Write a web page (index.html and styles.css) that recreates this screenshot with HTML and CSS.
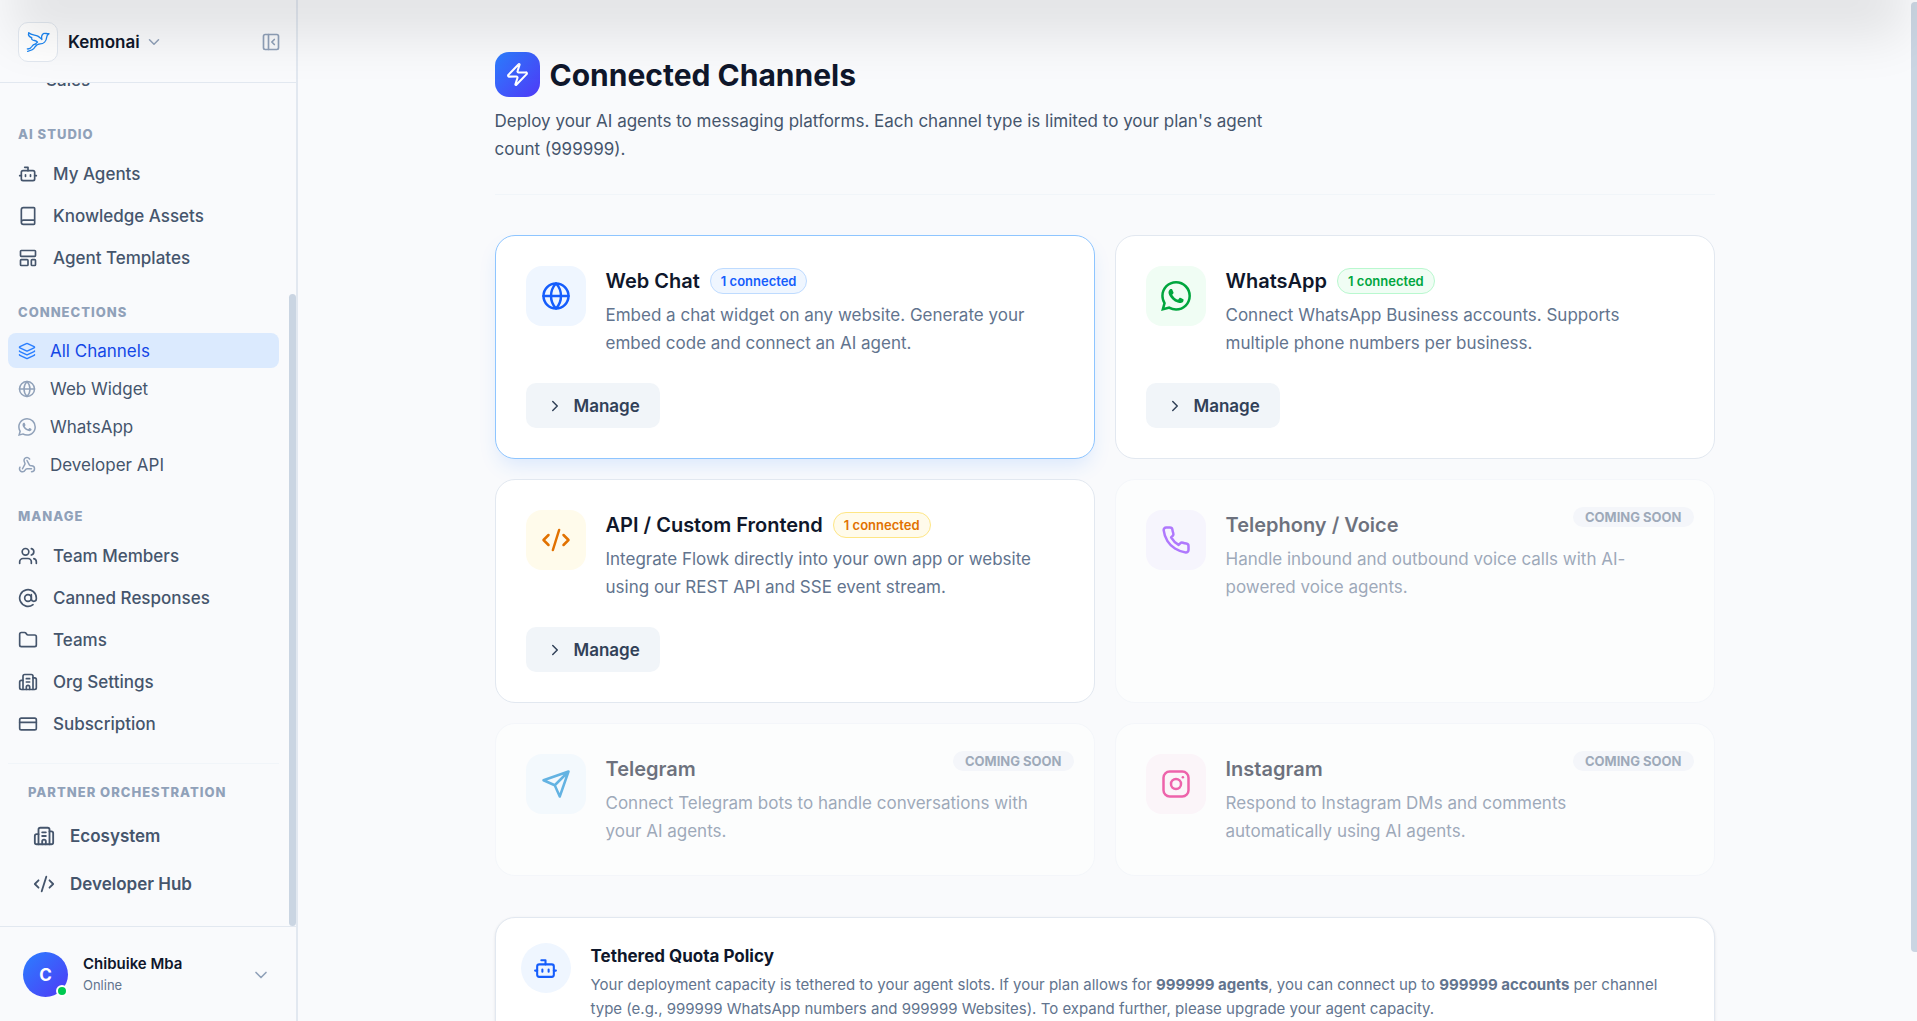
FILE: index.html
```
<!DOCTYPE html>
<html lang="en">
<head>
    <meta charset="UTF-8">
    <meta name="viewport" content="width=device-width, initial-scale=1.0">
    <title>Connected Channels - Kemonai</title>
    <link rel="stylesheet" href="styles.css">
</head>
<body>
    <!-- Shared icons -->
    <svg class="sprite" aria-hidden="true">
        <symbol id="bot" viewBox="0 0 24 24"><path d="M12 8V4H8"/><rect width="16" height="12" x="4" y="8" rx="2"/><path d="M2 14h2M20 14h2M15 13v2M9 13v2"/></symbol>
        <symbol id="book" viewBox="0 0 24 24"><path d="M4 19.5v-15A2.5 2.5 0 0 1 6.500 2H19a1 1 0 0 1 1 1v18a1 1 0 0 1-1 1H6.500a1 1 0 0 1 0-5H20"/></symbol>
        <symbol id="template" viewBox="0 0 24 24"><rect width="18" height="7" x="3" y="3" rx="1"/><rect width="9" height="7" x="3" y="14" rx="1"/><rect width="5" height="7" x="16" y="14" rx="1"/></symbol>
        <symbol id="layers" viewBox="0 0 24 24"><path d="M12.830 2.180a2 2 0 0 0-1.660 0L2.600 6.080a1 1 0 0 0 0 1.830l8.580 3.910a2 2 0 0 0 1.660 0l8.580-3.900a1 1 0 0 0 0-1.830z"/><path d="M2 12a1 1 0 0 0 .580.910l8.600 3.910a2 2 0 0 0 1.650 0l8.580-3.900A1 1 0 0 0 22 12"/><path d="M2 17a1 1 0 0 0 .580.910l8.600 3.910a2 2 0 0 0 1.650 0l8.580-3.900A1 1 0 0 0 22 17"/></symbol>
        <symbol id="globe" viewBox="0 0 24 24"><circle cx="12" cy="12" r="10"/><path d="M12 2a14.500 14.500 0 0 0 0 20 14.500 14.500 0 0 0 0-20M2 12h20"/></symbol>
        <symbol id="whatsapp" viewBox="0 0 24 24"><path fill="currentColor" stroke="none" d="M17.472 14.382c-.297-.149-1.758-.867-2.03-.967-.273-.099-.471-.148-.67.15-.197.297-.767.966-.94 1.164-.173.199-.347.223-.644.075-.297-.15-1.255-.463-2.39-1.475-.883-.788-1.48-1.761-1.653-2.059-.173-.297-.018-.458.13-.606.134-.133.298-.347.446-.52.149-.174.198-.298.298-.497.099-.198.05-.371-.025-.52-.075-.149-.669-1.612-.916-2.207-.242-.579-.487-.5-.669-.51-.173-.008-.371-.01-.57-.01-.198 0-.52.074-.792.372-.272.297-1.04 1.016-1.04 2.479 0 1.462 1.065 2.875 1.213 3.074.149.198 2.096 3.2 5.077 4.487.709.306 1.262.489 1.694.625.712.227 1.36.195 1.871.118.571-.085 1.758-.719 2.006-1.413.248-.694.248-1.289.173-1.413-.074-.124-.272-.198-.57-.347m-5.421 7.403h-.004a9.87 9.87 0 01-5.031-1.378l-.361-.214-3.741.982.998-3.648-.235-.374a9.86 9.86 0 01-1.51-5.26c.001-5.45 4.436-9.884 9.888-9.884 2.64 0 5.122 1.03 6.988 2.898a9.825 9.825 0 012.893 6.994c-.003 5.45-4.437 9.884-9.885 9.884m8.413-18.297A11.815 11.815 0 0012.05 0C5.495 0 .16 5.335.157 11.892c0 2.096.547 4.142 1.588 5.945L.057 24l6.305-1.654a11.882 11.882 0 005.683 1.448h.005c6.554 0 11.89-5.335 11.893-11.893a11.821 11.821 0 00-3.48-8.413z"/></symbol>
        <symbol id="webhook" viewBox="0 0 24 24"><path d="M18 16.980h-5.990c-1.100 0-1.950.940-2.480 1.900A4 4 0 0 1 2 17c.010-.700.200-1.400.570-2"/><path d="m6 17 3.130-5.780c.530-.970.100-2.180-.500-3.100a4 4 0 1 1 6.890-4.060"/><path d="m12 6 3.130 5.730C15.660 12.700 16.900 13 18 13a4 4 0 0 1 0 8"/></symbol>
        <symbol id="users" viewBox="0 0 24 24"><path d="M16 21v-2a4 4 0 0 0-4-4H6a4 4 0 0 0-4 4v2"/><circle cx="9" cy="7" r="4"/><path d="M22 21v-2a4 4 0 0 0-3-3.870M16 3.130a4 4 0 0 1 0 7.750"/></symbol>
        <symbol id="at" viewBox="0 0 24 24"><circle cx="12" cy="12" r="4"/><path d="M16 8v5a3 3 0 0 0 6 0v-1a10 10 0 1 0-4 8"/></symbol>
        <symbol id="folder" viewBox="0 0 24 24"><path d="M20 20a2 2 0 0 0 2-2V8a2 2 0 0 0-2-2h-7.900a2 2 0 0 1-1.690-.900L9.600 3.900A2 2 0 0 0 7.930 3H4a2 2 0 0 0-2 2v13a2 2 0 0 0 2 2Z"/></symbol>
        <symbol id="building" viewBox="0 0 24 24"><path d="M10 12h4M10 8h4M14 21v-3a2 2 0 0 0-4 0v3"/><path d="M6 10H4a2 2 0 0 0-2 2v7a2 2 0 0 0 2 2h16a2 2 0 0 0 2-2V9a2 2 0 0 0-2-2h-2"/><path d="M6 21V5a2 2 0 0 1 2-2h8a2 2 0 0 1 2 2v16"/></symbol>
        <symbol id="card" viewBox="0 0 24 24"><rect width="20" height="14" x="2" y="5" rx="2"/><path d="M2 10h20"/></symbol>
        <symbol id="code" viewBox="0 0 24 24"><path d="m18 16 4-4-4-4M6 8l-4 4 4 4M14.500 4l-5 16"/></symbol>
        <symbol id="phone" viewBox="0 0 24 24"><path d="M22 16.920v3a2 2 0 0 1-2.180 2 19.790 19.790 0 0 1-8.630-3.070 19.500 19.500 0 0 1-6-6 19.790 19.790 0 0 1-3.070-8.670A2 2 0 0 1 4.110 2h3a2 2 0 0 1 2 1.720 12.840 12.840 0 0 0 .700 2.810 2 2 0 0 1-.450 2.110L8.090 9.910a16 16 0 0 0 6 6l1.270-1.270a2 2 0 0 1 2.110-.450 12.840 12.840 0 0 0 2.810.700A2 2 0 0 1 22 16.920z"/></symbol>
        <symbol id="send" viewBox="0 0 24 24"><path d="m22 2-7 20-4-9-9-4ZM22 2 11 13"/></symbol>
        <symbol id="instagram" viewBox="0 0 24 24"><rect width="20" height="20" x="2" y="2" rx="5"/><circle cx="12" cy="12" r="4"/><path d="M17.500 6.500h.010"/></symbol>
        <symbol id="zap" viewBox="0 0 24 24"><path d="M4 14a1 1 0 0 1-.780-1.630l9.900-10.200a.500.500 0 0 1 .860.460l-1.920 6.020A1 1 0 0 0 13 10h7a1 1 0 0 1 .780 1.630l-9.900 10.200a.500.500 0 0 1-.860-.460l1.920-6.020A1 1 0 0 0 11 14z"/></symbol>
        <symbol id="panel" viewBox="0 0 24 24"><rect width="18" height="18" x="3" y="3" rx="2"/><path d="M9 3v18M16 15l-3-3 3-3"/></symbol>
        <symbol id="down" viewBox="0 0 24 24"><path d="m6 9 6 6 6-6"/></symbol>
        <symbol id="right" viewBox="0 0 24 24"><path d="m9 18 6-6-6-6"/></symbol>
        <symbol id="bird" viewBox="78 94 71 63"><path d="M86 98C84 106 88 111 95 113C93 117 97 121 103 121C108 122 110 123 112 126C108 131 104 133 99 135M86 98C94 106 105 104 113 108C118 111 121 115 125 118C123 111 124 105 129 101C135 98 138 102 146 101C141 104 139 106 139 112C138 123 130 131 120 131C112 131 108 135 104 141C100 148 92 151 83 153M82 146C90 147 93 143 96 138C98 134 103 131 107 132"/></symbol>
    </svg>

    <div class="app">
        <aside class="sidebar">
            <header class="workspace">
                <span class="workspace-logo"><svg class="icon"><use href="#bird"/></svg></span>
                <button type="button" class="workspace-name">Kemonai <svg class="icon icon-sm"><use href="#down"/></svg></button>
                <button type="button" class="collapse" aria-label="Collapse sidebar"><svg class="icon"><use href="#panel"/></svg></button>
            </header>

            <nav class="nav">
                <div class="nav-group">
                    <a href="#" class="nav-child">Sales</a>
                </div>
                <div class="nav-group">
                    <h2 class="nav-label">AI STUDIO</h2>
                    <a href="#" class="nav-item"><svg class="icon"><use href="#bot"/></svg>My Agents</a>
                    <a href="#" class="nav-item"><svg class="icon"><use href="#book"/></svg>Knowledge Assets</a>
                    <a href="#" class="nav-item"><svg class="icon"><use href="#template"/></svg>Agent Templates</a>
                </div>
                <div class="nav-group channels">
                    <h2 class="nav-label">CONNECTIONS</h2>
                    <a href="#" class="nav-link active"><svg class="icon icon-sm"><use href="#layers"/></svg>All Channels</a>
                    <a href="#" class="nav-link"><svg class="icon icon-sm"><use href="#globe"/></svg>Web Widget</a>
                    <a href="#" class="nav-link"><svg class="icon icon-sm"><use href="#whatsapp"/></svg>WhatsApp</a>
                    <a href="#" class="nav-link"><svg class="icon icon-sm"><use href="#webhook"/></svg>Developer API</a>
                </div>
                <div class="nav-group">
                    <h2 class="nav-label">MANAGE</h2>
                    <a href="#" class="nav-item"><svg class="icon"><use href="#users"/></svg>Team Members</a>
                    <a href="#" class="nav-item"><svg class="icon"><use href="#at"/></svg>Canned Responses</a>
                    <a href="#" class="nav-item"><svg class="icon"><use href="#folder"/></svg>Teams</a>
                    <a href="#" class="nav-item"><svg class="icon"><use href="#building"/></svg>Org Settings</a>
                    <a href="#" class="nav-item"><svg class="icon"><use href="#card"/></svg>Subscription</a>
                </div>
                <div class="nav-group partner">
                    <h2 class="nav-label">PARTNER ORCHESTRATION</h2>
                    <a href="#" class="nav-partner"><svg class="icon icon-md"><use href="#building"/></svg>Ecosystem</a>
                    <a href="#" class="nav-partner"><svg class="icon icon-md"><use href="#code"/></svg>Developer Hub</a>
                </div>
                <span class="nav-thumb"></span>
            </nav>

            <footer class="account">
                <span class="avatar">C<span class="status"></span></span>
                <div class="account-text">
                    <strong>Chibuike Mba</strong>
                    <span>Online</span>
                </div>
                <button type="button" class="account-toggle" aria-label="Account menu"><svg class="icon"><use href="#down"/></svg></button>
            </footer>
        </aside>

        <main class="main">
            <div class="content">
                <header class="page-header">
                    <h1><span class="page-icon"><svg class="icon"><use href="#zap"/></svg></span>Connected Channels</h1>
                    <p>Deploy your AI agents to messaging platforms. Each channel type is limited to your plan's agent count (999999).</p>
                </header>

                <div class="cards">
                    <section class="card selected">
                        <div class="card-body">
                            <span class="tile blue"><svg class="icon"><use href="#globe"/></svg></span>
                            <div class="card-text">
                                <h3>Web Chat <span class="badge blue">1 connected</span></h3>
                                <p>Embed a chat widget on any website. Generate your embed code and connect an AI agent.</p>
                            </div>
                        </div>
                        <button type="button" class="manage"><svg class="icon icon-sm"><use href="#right"/></svg>Manage</button>
                    </section>

                    <section class="card">
                        <div class="card-body">
                            <span class="tile green"><svg class="icon"><use href="#whatsapp"/></svg></span>
                            <div class="card-text">
                                <h3>WhatsApp <span class="badge green">1 connected</span></h3>
                                <p>Connect WhatsApp Business accounts. Supports multiple phone numbers per business.</p>
                            </div>
                        </div>
                        <button type="button" class="manage"><svg class="icon icon-sm"><use href="#right"/></svg>Manage</button>
                    </section>

                    <section class="card">
                        <div class="card-body">
                            <span class="tile amber"><svg class="icon"><use href="#code"/></svg></span>
                            <div class="card-text">
                                <h3>API / Custom Frontend <span class="badge amber">1 connected</span></h3>
                                <p>Integrate Flowk directly into your own app or website using our REST API and SSE event stream.</p>
                            </div>
                        </div>
                        <button type="button" class="manage"><svg class="icon icon-sm"><use href="#right"/></svg>Manage</button>
                    </section>

                    <section class="card soon">
                        <span class="soon-badge">COMING SOON</span>
                        <div class="card-body">
                            <span class="tile violet"><svg class="icon"><use href="#phone"/></svg></span>
                            <div class="card-text">
                                <h3>Telephony / Voice</h3>
                                <p>Handle inbound and outbound voice calls with AI-powered voice agents.</p>
                            </div>
                        </div>
                    </section>

                    <section class="card soon">
                        <span class="soon-badge">COMING SOON</span>
                        <div class="card-body">
                            <span class="tile sky"><svg class="icon"><use href="#send"/></svg></span>
                            <div class="card-text">
                                <h3>Telegram</h3>
                                <p>Connect Telegram bots to handle conversations with your AI agents.</p>
                            </div>
                        </div>
                    </section>

                    <section class="card soon">
                        <span class="soon-badge">COMING SOON</span>
                        <div class="card-body">
                            <span class="tile pink"><svg class="icon"><use href="#instagram"/></svg></span>
                            <div class="card-text">
                                <h3>Instagram</h3>
                                <p>Respond to Instagram DMs and comments automatically using AI agents.</p>
                            </div>
                        </div>
                    </section>
                </div>

                <section class="quota">
                    <span class="quota-icon"><svg class="icon"><use href="#bot"/></svg></span>
                    <div>
                        <h3>Tethered Quota Policy</h3>
                        <p>Your deployment capacity is tethered to your agent slots. If your plan allows for <strong>999999 agents</strong>, you can connect up to <strong>999999 accounts</strong> per channel type (e.g., 999999 WhatsApp numbers and 999999 Websites). To expand further, please upgrade your agent capacity.</p>
                    </div>
                </section>
            </div>
        </main>
    </div>

    <span class="page-thumb"></span>
    <div class="top-shade"></div>
</body>
</html>
```
FILE: styles.css
```
/* Global styles */
* {
    box-sizing: border-box;
}

body {
    font-family: "Inter", sans-serif;
    font-size: 17px;
    margin: 0;
    background-color: #f9fafc;
    color: #0f172b;
    overflow: hidden;
}

h1, h2, h3, p {
    margin: 0;
}

a {
    color: inherit;
    text-decoration: none;
}

button {
    font: inherit;
    color: inherit;
    background: none;
    border: none;
    padding: 0;
    cursor: pointer;
}

.sprite {
    display: none;
}

.icon {
    width: 20px;
    height: 20px;
    flex-shrink: 0;
    fill: none;
    stroke: currentColor;
    stroke-width: 2;
    stroke-linecap: round;
    stroke-linejoin: round;
}

.icon-sm {
    width: 18px;
    height: 18px;
}

.icon-md {
    width: 22px;
    height: 22px;
}

.app {
    display: flex;
    height: 100vh;
}

/* Sidebar */
.sidebar {
    width: 298px;
    flex-shrink: 0;
    display: flex;
    flex-direction: column;
    border-right: 2px solid #e2e8f0;
}

.workspace {
    display: flex;
    align-items: center;
    gap: 10px;
    padding: 22px 15px 20px 18px;
    border-bottom: 1px solid #e2e8f0;
}

.workspace-logo {
    width: 40px;
    height: 40px;
    display: flex;
    align-items: center;
    justify-content: center;
    border: 1px solid #e2e8f0;
    border-radius: 10px;
    background-color: #fff;
    color: #1c86f2;
}

.workspace-logo .icon {
    width: 24px;
    height: 22px;
    stroke-width: 4;
}

.workspace-name {
    display: flex;
    align-items: center;
    gap: 5px;
    font-weight: 600;
}

.workspace-name .icon {
    color: #90a1b9;
}

.collapse {
    display: flex;
    margin-left: auto;
    color: #90a1b9;
}

/* Nav is shown scrolled to its end */
.nav {
    flex: 1;
    min-height: 0;
    overflow: hidden;
    position: relative;
    display: flex;
    flex-direction: column;
    justify-content: flex-end;
    padding: 0 17px 20px 8px;
    color: #45556c;
}

.nav-group {
    display: flex;
    flex-direction: column;
    gap: 2px;
    flex-shrink: 0;
    margin-top: 24px;
}

.channels,
.partner {
    gap: 3px;
}

.nav-label {
    font-size: 13px;
    line-height: 20px;
    font-weight: 800;
    letter-spacing: 1px;
    color: #90a1b9;
    padding-left: 10px;
    margin-bottom: 8px;
}

.nav-item,
.nav-link,
.nav-child,
.nav-partner {
    display: flex;
    align-items: center;
    border-radius: 8px;
}

.nav-item {
    height: 40px;
    gap: 15px;
    padding-left: 10px;
    font-weight: 500;
}

.nav-link {
    height: 35px;
    gap: 14px;
    padding-left: 10px;
}

.nav-link .icon {
    color: #90a1b9;
}

.nav-child {
    height: 40px;
    padding-left: 38px;
    font-weight: 500;
}

.nav-link.active {
    background-color: #dbeafe;
    color: #1447e6;
}

.nav-link.active .icon {
    color: #2b7fff;
}

.partner {
    border-top: 1px solid #f1f5f9;
    margin-top: 19px;
    padding-top: 18px;
}

.partner .nav-label {
    padding-left: 20px;
}

.nav-partner {
    height: 45px;
    gap: 15px;
    padding-left: 25px;
    font-weight: 600;
}

.nav-thumb {
    position: absolute;
    right: 0;
    bottom: 0;
    width: 7px;
    height: 75%;
    border-radius: 4px;
    background-color: #cad5e2;
}

.account {
    display: flex;
    align-items: center;
    gap: 15px;
    padding: 25px 25px 24px 23px;
    border-top: 1px solid #e2e8f0;
}

.avatar {
    position: relative;
    width: 45px;
    height: 45px;
    display: flex;
    align-items: center;
    justify-content: center;
    border-radius: 50%;
    background: linear-gradient(135deg, #2b7fff, #4f39f6);
    color: #fff;
    font-weight: 700;
}

.status {
    position: absolute;
    right: 0;
    bottom: 0;
    width: 12px;
    height: 12px;
    border: 2px solid #fff;
    border-radius: 50%;
    background-color: #00c950;
}

.account-text {
    display: flex;
    flex-direction: column;
    gap: 1px;
    font-size: 13px;
    line-height: 20px;
    color: #62748e;
}

.account-text strong {
    font-size: 15px;
    font-weight: 600;
    color: #0f172b;
}

.account-toggle {
    display: flex;
    margin-left: auto;
    color: #90a1b9;
}

/* Main area */
.main {
    flex: 1;
    min-width: 0;
    overflow-y: auto;
    scrollbar-width: none;
    padding: 52px 46px 40px 40px;
}

.content {
    max-width: 1220px;
    margin: 0 auto;
}

.page-header {
    padding-bottom: 31px;
    border-bottom: 1px solid #f1f5f9;
    margin-bottom: 40px;
}

.page-header h1 {
    display: flex;
    align-items: center;
    gap: 10px;
    font-size: 30px;
    font-weight: 700;
    margin-bottom: 10px;
}

.page-header p {
    max-width: 800px;
    line-height: 28px;
    color: #45556c;
}

.page-icon {
    width: 45px;
    height: 45px;
    display: flex;
    align-items: center;
    justify-content: center;
    border-radius: 14px;
    background: linear-gradient(135deg, #2b7fff, #4f39f6);
    color: #fff;
}

.page-icon .icon {
    width: 25px;
    height: 25px;
}

/* Channel cards */
.cards {
    display: grid;
    grid-template-columns: 1fr 1fr;
    gap: 20px;
    margin-bottom: 41px;
}

.card {
    position: relative;
    padding: 30px;
    border: 1px solid #e2e8f0;
    border-radius: 20px;
    background-color: #fff;
}

.card.selected {
    border-color: #8ec5ff;
    box-shadow: 0 10px 20px -4px rgba(43, 127, 255, 0.15);
}

.card.soon {
    border-color: #f1f5f9;
    opacity: 0.6;
}

.card-body {
    display: flex;
    gap: 20px;
}

.card-text {
    padding-right: 10px;
}

.tile {
    width: 60px;
    height: 60px;
    flex-shrink: 0;
    display: flex;
    align-items: center;
    justify-content: center;
    border-radius: 16px;
}

.tile .icon {
    width: 30px;
    height: 30px;
}

.card h3 {
    display: flex;
    align-items: center;
    gap: 10px;
    height: 30px;
    margin-bottom: 5px;
    font-size: 20px;
    font-weight: 600;
}

.card p {
    line-height: 28px;
    color: #62748e;
}

.badge {
    border: 1px solid;
    border-radius: 13px;
    padding: 0 10px;
    font-size: 13px;
    line-height: 24px;
    font-weight: 600;
}

.blue {
    background-color: #eff6ff;
    border-color: #bedbff;
    color: #155dfc;
}

.green {
    background-color: #f0fdf4;
    border-color: #b9f8cf;
    color: #00a63e;
}

.amber {
    background-color: #fffbeb;
    border-color: #fee685;
    color: #e17100;
}

.violet {
    background-color: #f5f3ff;
    color: #7f22fe;
}

.sky {
    background-color: #f0f9ff;
    color: #0084d1;
}

.pink {
    background-color: #fdf2f8;
    color: #e60076;
}

.soon-badge {
    position: absolute;
    top: 27px;
    right: 20px;
    padding: 0 12px;
    border-radius: 10px;
    background-color: #f1f5f9;
    color: #62748e;
    font-size: 13px;
    line-height: 20px;
    font-weight: 700;
}

.manage {
    display: flex;
    align-items: center;
    gap: 10px;
    height: 45px;
    margin-top: 26px;
    padding: 0 20px;
    border-radius: 10px;
    background-color: #f1f5f9;
    color: #314158;
    font-weight: 600;
}

/* Quota policy */
.quota {
    display: flex;
    gap: 20px;
    padding: 25px;
    border: 1px solid #e2e8f0;
    border-radius: 20px;
    background-color: #fff;
    box-shadow: 0 1px 3px rgba(15, 23, 43, 0.1);
}

.quota-icon {
    width: 50px;
    height: 50px;
    flex-shrink: 0;
    display: flex;
    align-items: center;
    justify-content: center;
    border-radius: 50%;
    background-color: #eff6ff;
    color: #155dfc;
}

.quota-icon .icon {
    width: 25px;
    height: 25px;
}

.quota h3 {
    font-size: 17px;
    line-height: 26px;
    font-weight: 700;
    margin-bottom: 4px;
}

.quota p {
    font-size: 15px;
    line-height: 24px;
    color: #62748e;
}

.quota p strong {
    font-weight: 700;
}

.page-thumb {
    position: fixed;
    top: 2px;
    right: 0;
    width: 6px;
    height: 93%;
    border-radius: 4px 0 0 4px;
    background-color: #cad5e2;
}

/* Soft shadow falling over the top of the page */
.top-shade {
    position: fixed;
    top: -100px;
    left: 0;
    right: 0;
    height: 100px;
    box-shadow: 0 50px 50px -12px rgba(0, 0, 0, 0.09);
    pointer-events: none;
}
```
